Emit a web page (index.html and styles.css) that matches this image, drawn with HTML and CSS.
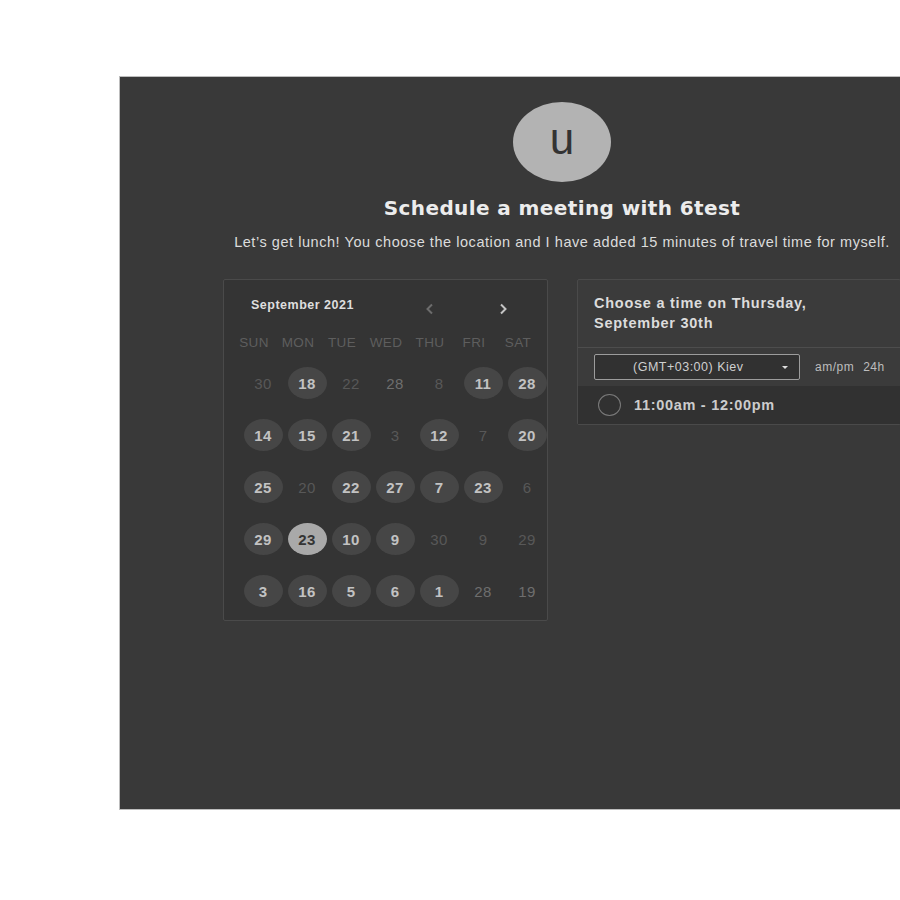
FILE: index.html
```html
<!DOCTYPE html>
<html>
<head>
<meta charset="utf-8">
<link rel="stylesheet" href="styles.css">
</head>
<body>
<div class="frame">
  <div class="panel">
    <div class="avatar"><span>u</span></div>
    <h1 class="title">Schedule a meeting with 6test</h1>
    <p class="subtitle">Let’s get lunch! You choose the location and I have added 15 minutes of travel time for myself.</p>
    <div class="cards">
      <div class="calendar">
        <div class="cal-head">
          <span class="month">September 2021</span>
          <span class="nav prev"><svg width="10" height="12" viewBox="0 0 10 12"><polyline points="7,1.5 2.5,6 7,10.5" fill="none" stroke="currentColor" stroke-width="2"/></svg></span>
          <span class="nav next"><svg width="10" height="12" viewBox="0 0 10 12"><polyline points="3,1.5 7.5,6 3,10.5" fill="none" stroke="currentColor" stroke-width="2"/></svg></span>
        </div>
        <div class="weekdays">
          <span>SUN</span><span>MON</span><span>TUE</span><span>WED</span><span>THU</span><span>FRI</span><span>SAT</span>
        </div>
        <div class="days">
          <span class="day dim">30</span><span class="day on">18</span><span class="day dim">22</span><span class="day mid">28</span><span class="day dim">8</span><span class="day on">11</span><span class="day on">28</span>
          <span class="day on">14</span><span class="day on">15</span><span class="day on">21</span><span class="day dim">3</span><span class="day on">12</span><span class="day dim">7</span><span class="day on">20</span>
          <span class="day on">25</span><span class="day dim">20</span><span class="day on">22</span><span class="day on">27</span><span class="day on">7</span><span class="day on">23</span><span class="day dim">6</span>
          <span class="day on">29</span><span class="day sel">23</span><span class="day on">10</span><span class="day on">9</span><span class="day dim">30</span><span class="day dim">9</span><span class="day dim">29</span>
          <span class="day on">3</span><span class="day on">16</span><span class="day on">5</span><span class="day on">6</span><span class="day on">1</span><span class="day mid">28</span><span class="day mid">19</span>
        </div>
      </div>
      <div class="times">
        <div class="times-head">Choose a time on Thursday,<br>September 30th</div>
        <div class="tz-row">
          <div class="tz-select"><span class="tz-label">(GMT+03:00) Kiev</span><span class="caret"></span></div>
          <div class="fmt"><span>am/pm</span><span>24h</span></div>
        </div>
        <div class="slot">
          <span class="radio"></span>
          <span class="slot-label">11:00am - 12:00pm</span>
        </div>
      </div>
    </div>
  </div>
</div>
</body>
</html>
```

FILE: styles.css
```css
html, body {
  margin: 0;
  padding: 0;
  background: #ffffff;
  overflow: hidden;
}
body {
  font-family: "Liberation Sans", Arial, sans-serif;
}
.frame {
  padding: 76px 0 0 119px;
}
.panel {
  box-sizing: border-box;
  width: 886px;
  height: 734px;
  background: #393939;
  border: 1px solid #bdbdbd;
  display: flex;
  flex-direction: column;
  align-items: center;
  padding-top: 25px;
}
.avatar {
  width: 98px;
  height: 80px;
  border-radius: 50%;
  background: #b3b3b3;
  display: flex;
  align-items: center;
  justify-content: center;
}
.avatar span {
  font-size: 44px;
  line-height: 1;
  color: #333333;
  margin-top: -6px;
}
.title {
  margin: 13px 0 0;
  font-family: "DejaVu Sans", "Liberation Sans", sans-serif;
  font-size: 20px;
  line-height: 26px;
  font-weight: 700;
  color: #ececec;
  letter-spacing: 0.4px;
}
.subtitle {
  margin: 12px 0 0;
  font-size: 14.5px;
  line-height: 18px;
  color: #dcdcdc;
  letter-spacing: 0.55px;
}
.cards {
  margin-top: 28px;
  display: flex;
  gap: 29px;
  align-items: flex-start;
}
.calendar {
  box-sizing: border-box;
  width: 325px;
  background: #343434;
  border: 1px solid #4a4a4a;
  border-radius: 2px;
  padding: 15px 0 3px 0;
}
.cal-head {
  display: flex;
  align-items: center;
  height: 20px;
  padding-left: 27px;
}
.month {
  width: 169px;
  font-size: 12.5px;
  font-weight: 700;
  color: #dedede;
  letter-spacing: 0.5px;
}
.nav {
  width: 20px;
  height: 20px;
  display: flex;
  align-items: center;
  justify-content: center;
  margin-top: 8px;
}
.prev {
  color: #6c6c6c;
}
.next {
  color: #c4c4c4;
  margin-left: 53px;
}
.weekdays {
  margin-top: 20px;
  padding-left: 8px;
  display: grid;
  grid-template-columns: repeat(7, 44px);
  font-size: 13.5px;
  line-height: 16px;
  color: #5e5e5e;
  text-align: center;
  letter-spacing: 0.4px;
}
.days {
  margin-top: 6px;
  padding-left: 17px;
  display: grid;
  grid-template-columns: repeat(7, 44px);
  grid-auto-rows: 52px;
}
.day {
  display: flex;
  align-items: center;
  justify-content: center;
  font-size: 15px;
  color: #585858;
  letter-spacing: 0.3px;
}
.day.mid {
  color: #6e6e6e;
}
.day.on, .day.sel {
  font-weight: 700;
  color: #c2c2c2;
  position: relative;
  z-index: 0;
}
.day.on::before, .day.sel::before {
  content: "";
  position: absolute;
  width: 39px;
  height: 32px;
  border-radius: 50%;
  background: #464646;
  top: 10px;
  left: 2.5px;
  z-index: -1;
}
.day.sel {
  color: #343434;
}
.day.sel::before {
  background: #a9a9a9;
}
.times {
  box-sizing: border-box;
  width: 324px;
  background: #3b3b3b;
  border: 1px solid #4a4a4a;
  border-radius: 2px;
}
.times-head {
  padding: 13px 16px 14px;
  font-size: 14.5px;
  line-height: 20px;
  font-weight: 700;
  color: #dcdcdc;
  letter-spacing: 0.75px;
  border-bottom: 1px solid #4d4d4d;
}
.tz-row {
  display: flex;
  align-items: center;
  padding: 6px 0 6px 16px;
}
.tz-select {
  box-sizing: border-box;
  width: 206px;
  height: 26px;
  border: 1px solid #9c9c9c;
  border-radius: 2px;
  background: #313131;
  display: flex;
  align-items: center;
  padding-left: 38px;
}
.tz-label {
  flex: 1;
  font-size: 12.5px;
  color: #cfcfcf;
  letter-spacing: 0.5px;
}
.caret {
  width: 0;
  height: 0;
  border-left: 3px solid transparent;
  border-right: 3px solid transparent;
  border-top: 3px solid #dddddd;
  margin-right: 11px;
}
.fmt {
  margin-left: 15px;
  display: flex;
  gap: 9px;
  font-size: 12px;
  color: #bdbdbd;
  letter-spacing: 0.5px;
}
.slot {
  display: flex;
  align-items: center;
  height: 38px;
  background: #313131;
  padding-left: 20px;
}
.radio {
  box-sizing: border-box;
  width: 23px;
  height: 22px;
  border: 1.5px solid #7a7a7a;
  border-radius: 50%;
}
.slot-label {
  margin-left: 13px;
  font-size: 14.5px;
  font-weight: 700;
  color: #cccccc;
  letter-spacing: 0.7px;
}
```
